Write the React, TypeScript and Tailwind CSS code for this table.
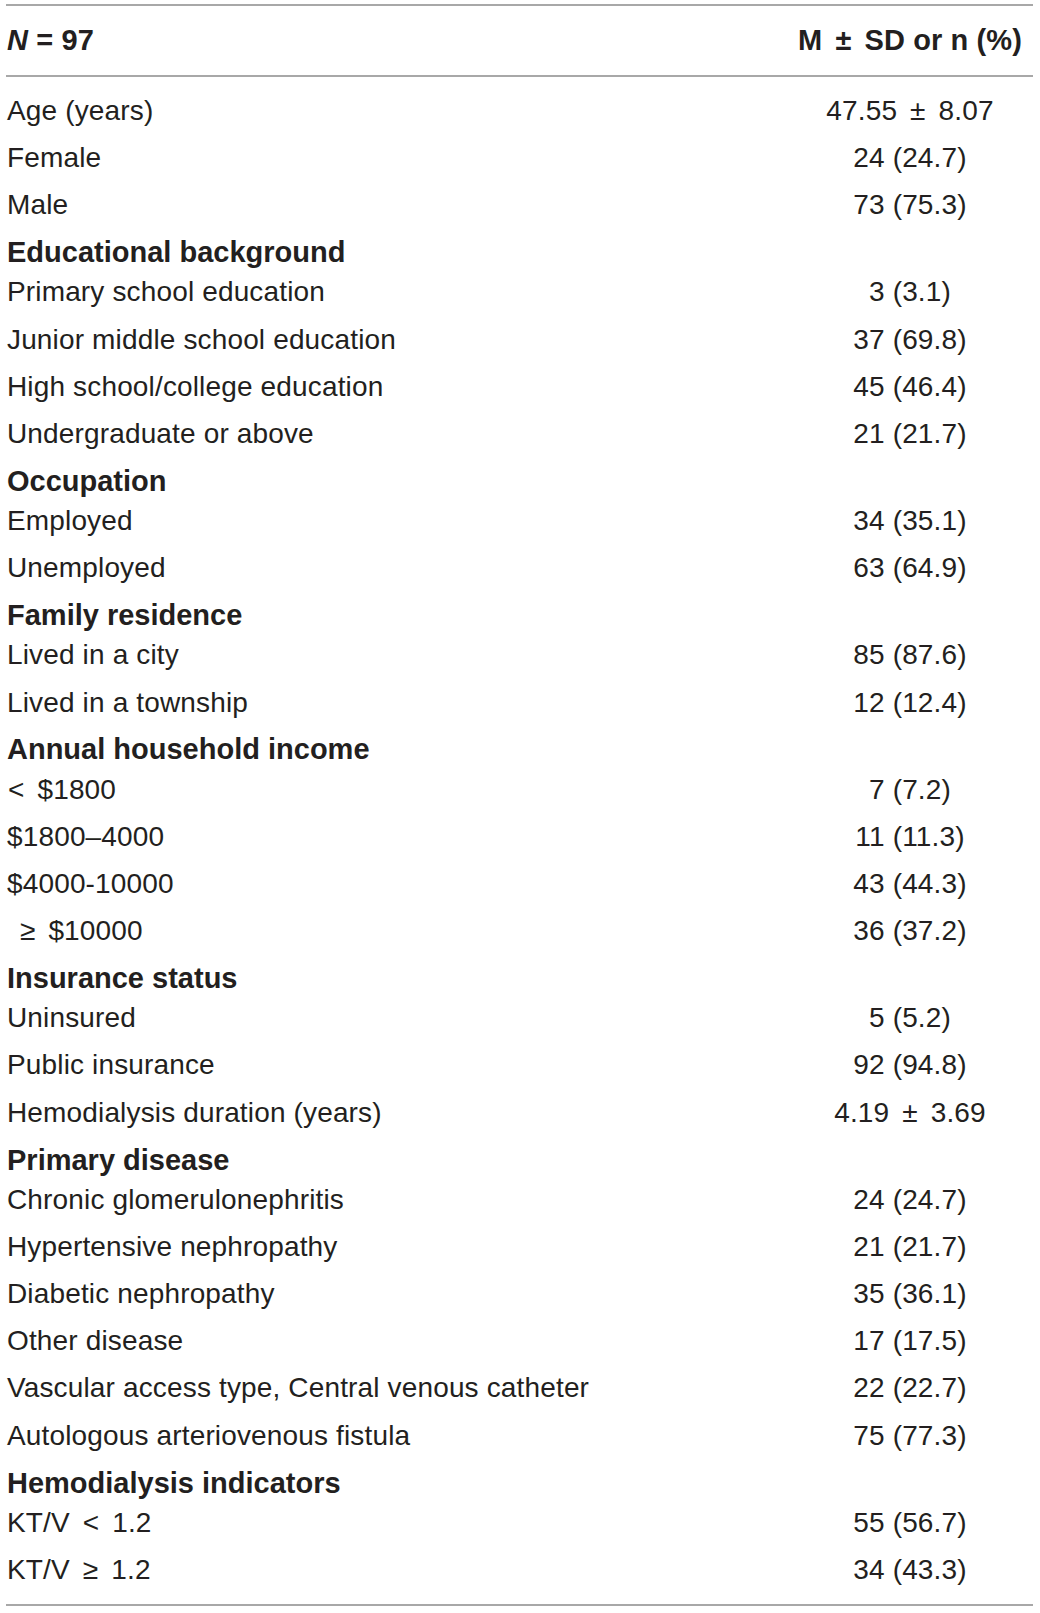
type Row = { label: string; value?: string; head?: boolean };

const rows: Row[] = [
  { label: "Age (years)", value: "47.55 ± 8.07" },
  { label: "Female", value: "24 (24.7)" },
  { label: "Male", value: "73 (75.3)" },
  { label: "Educational background", head: true },
  { label: "Primary school education", value: "3 (3.1)" },
  { label: "Junior middle school education", value: "37 (69.8)" },
  { label: "High school/college education", value: "45 (46.4)" },
  { label: "Undergraduate or above", value: "21 (21.7)" },
  { label: "Occupation", head: true },
  { label: "Employed", value: "34 (35.1)" },
  { label: "Unemployed", value: "63 (64.9)" },
  { label: "Family residence", head: true },
  { label: "Lived in a city", value: "85 (87.6)" },
  { label: "Lived in a township", value: "12 (12.4)" },
  { label: "Annual household income", head: true },
  { label: "< $1800", value: "7 (7.2)" },
  { label: "$1800–4000", value: "11 (11.3)" },
  { label: "$4000-10000", value: "43 (44.3)" },
  { label: "\u00a0≥ $10000", value: "36 (37.2)" },
  { label: "Insurance status", head: true },
  { label: "Uninsured", value: "5 (5.2)" },
  { label: "Public insurance", value: "92 (94.8)" },
  { label: "Hemodialysis duration (years)", value: "4.19 ± 3.69" },
  { label: "Primary disease", head: true },
  { label: "Chronic glomerulonephritis", value: "24 (24.7)" },
  { label: "Hypertensive nephropathy", value: "21 (21.7)" },
  { label: "Diabetic nephropathy", value: "35 (36.1)" },
  { label: "Other disease", value: "17 (17.5)" },
  { label: "Vascular access type, Central venous catheter", value: "22 (22.7)" },
  { label: "Autologous arteriovenous fistula", value: "75 (77.3)" },
  { label: "Hemodialysis indicators", head: true },
  { label: "KT/V < 1.2", value: "55 (56.7)" },
  { label: "KT/V ≥ 1.2", value: "34 (43.3)" },
];

// math symbols sit wider in the original typesetting
const withSymbols = (text: string) =>
  text.split(/([±<≥])/).map((part, i) =>
    /^[±<≥]$/.test(part) ? (
      <span key={i} className={i === 1 && text.startsWith(part) ? "mr-[5px] ml-[1px]" : "mx-[5px]"}>
        {part}
      </span>
    ) : (
      part
    )
  );

export default function App() {
  return (
    <div className="bg-white min-h-screen pt-[4px]">
      <div
        className="ml-[6px] w-[1027px] text-[28px] tracking-[0.15px] text-[#231f20]"
        style={{ fontFamily: '"Liberation Sans", Arial, sans-serif' }}
      >
        <div className="grid grid-cols-[1fr_246px] items-center h-[73px] border-t-2 border-b-2 border-[#a8a8a8] font-bold text-[29px] tracking-[0.1px]">
          <div className="pl-[1px]">
            <i>N</i> = 97
          </div>
          <div className="text-center whitespace-nowrap">{withSymbols("M ± SD or n (%)")}</div>
        </div>
        <div className="pt-[10.4px] pb-[10.4px] border-b-2 border-[#a8a8a8]">
          {rows.map((r, i) =>
            r.head ? (
              <div
                key={i}
                className="pl-[1px] pt-[9.3px] pb-[2.6px] leading-[28px] font-bold text-[29px] tracking-[0px]"
              >
                {r.label}
              </div>
            ) : (
              <div key={i} className="grid grid-cols-[1fr_246px] py-[9.6px] leading-[28px]">
                <div className="pl-[1px] whitespace-pre">{withSymbols(r.label)}</div>
                <div className="text-center whitespace-nowrap">{withSymbols(r.value ?? "")}</div>
              </div>
            )
          )}
        </div>
      </div>
    </div>
  );
}
